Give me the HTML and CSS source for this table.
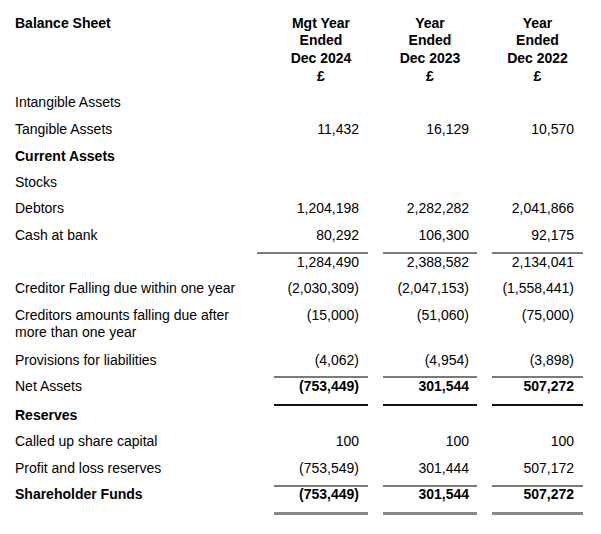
FILE: index.html
```html
<!DOCTYPE html>
<html>
<head>
<meta charset="utf-8">
<link rel="stylesheet" href="styles.css">
</head>
<body>
<div class="sheet">
  <div class="row head">
    <div class="label">Balance Sheet</div>
    <div class="hcol">Mgt Year<br>Ended<br>Dec 2024<br>£</div>
    <div class="hcol">Year<br>Ended<br>Dec 2023<br>£</div>
    <div class="hcol">Year<br>Ended<br>Dec 2022<br>£</div>
  </div>

  <div class="row r265"><div class="label">Intangible Assets</div><div class="num"></div><div class="num"></div><div class="num"></div></div>
  <div class="row r27"><div class="label">Tangible Assets</div><div class="num">11,432</div><div class="num c2">16,129</div><div class="num">10,570</div></div>
  <div class="row r26 bold"><div class="label">Current Assets</div><div class="num"></div><div class="num"></div><div class="num"></div></div>
  <div class="row r265"><div class="label">Stocks</div><div class="num"></div><div class="num"></div><div class="num"></div></div>
  <div class="row r265"><div class="label">Debtors</div><div class="num">1,204,198</div><div class="num c2">2,282,282</div><div class="num">2,041,866</div></div>
  <div class="row r26"><div class="label">Cash at bank</div><div class="num">80,292</div><div class="num c2">106,300</div><div class="num">92,175</div></div>

  <div class="row rule rule-a"><div></div><div class="seg wide"></div><div class="seg"></div><div class="seg"></div></div>
  <div class="row sub"><div class="label"></div><div class="num">1,284,490</div><div class="num c2">2,388,582</div><div class="num">2,134,041</div></div>

  <div class="row r266"><div class="label">Creditor Falling due within one year</div><div class="num">(2,030,309)</div><div class="num c2">(2,047,153)</div><div class="num">(1,558,441)</div></div>
  <div class="row two"><div class="label">Creditors amounts falling due after<br>more than one year</div><div class="num">(15,000)</div><div class="num c2">(51,060)</div><div class="num">(75,000)</div></div>
  <div class="row r26"><div class="label">Provisions for liabilities</div><div class="num">(4,062)</div><div class="num c2">(4,954)</div><div class="num">(3,898)</div></div>

  <div class="row rule rule-b"><div></div><div class="seg"></div><div class="seg"></div><div class="seg"></div></div>
  <div class="row net"><div class="label">Net Assets</div><div class="num bold">(753,449)</div><div class="num c2 bold">301,544</div><div class="num bold">507,272</div></div>
  <div class="row rule rule-c"><div></div><div class="seg dark"></div><div class="seg dark"></div><div class="seg dark"></div></div>

  <div class="row res bold"><div class="label">Reserves</div><div class="num"></div><div class="num"></div><div class="num"></div></div>
  <div class="row r266"><div class="label">Called up share capital</div><div class="num">100</div><div class="num c2">100</div><div class="num">100</div></div>
  <div class="row r27"><div class="label">Profit and loss reserves</div><div class="num">(753,549)</div><div class="num c2">301,444</div><div class="num">507,172</div></div>

  <div class="row rule rule-d"><div></div><div class="seg"></div><div class="seg"></div><div class="seg"></div></div>
  <div class="row share bold"><div class="label">Shareholder Funds</div><div class="num">(753,449)</div><div class="num c2">301,544</div><div class="num">507,272</div></div>
  <div class="row rule rule-e"><div></div><div class="seg thick"></div><div class="seg thick"></div><div class="seg thick"></div></div>
</div>
</body>
</html>
```

FILE: styles.css
```css
html, body {
  margin: 0;
  background: #fff;
}
body {
  padding: 14.5px 0 0 15px;
  font-family: "Liberation Sans", Arial, sans-serif;
  font-size: 14px;
  color: #000;
}
.sheet {
  width: 568px;
}
.row {
  display: grid;
  grid-template-columns: 244px 94px 94px 91px;
  column-gap: 15px;
}
.label {
  white-space: nowrap;
}
.num {
  text-align: right;
  padding-right: 9px;
  white-space: nowrap;
}
.num.c2 {
  padding-right: 8px;
}
.bold {
  font-weight: bold;
}
.head {
  font-weight: bold;
  line-height: 17.7px;
  height: 74.5px;
}
.hcol {
  text-align: center;
}
.r26 { height: 26px; line-height: 26px; }
.r265 { height: 26.5px; line-height: 26.5px; }
.r266 { height: 26.6px; line-height: 26.6px; }
.r27 { height: 27px; line-height: 27px; }
.sub {
  line-height: 17.4px;
  height: 21.4px;
}
.two {
  line-height: 17px;
  padding-top: 5.5px;
  height: 40px;
}
.net {
  line-height: 16.4px;
  height: 16.4px;
}
.res {
  line-height: 18.6px;
  height: 22.4px;
}
.share {
  line-height: 15.6px;
  height: 15.6px;
}
.rule-a { height: 6.5px; }
.rule-b { height: 5px; }
.rule-c { height: 11.1px; }
.rule-d { height: 5.5px; }
.rule-e { height: 12.3px; }
.seg {
  align-self: end;
  border-bottom: 2px solid #7a7a7a;
}
.seg.wide {
  margin-left: -17px;
}
.seg.dark {
  border-bottom-color: #111;
}
.seg.thick {
  border-bottom: 3px solid #878787;
}
```
